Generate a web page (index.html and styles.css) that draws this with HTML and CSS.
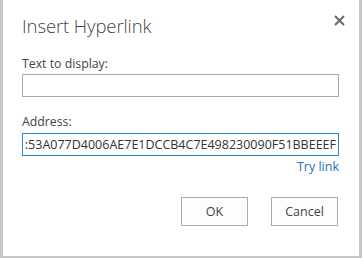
FILE: index.html
```html
<!DOCTYPE html>
<html>
<head>
<meta charset="utf-8">
<link rel="stylesheet" href="styles.css">
</head>
<body>
<div class="dialog">
  <div class="header">
    <h1 class="title">Insert Hyperlink</h1>
    <button class="close" aria-label="Close">
      <svg width="11" height="11" viewBox="0 0 11 11"><path d="M1 1L10 10M10 1L1 10" stroke="#6a6a6a" stroke-width="2" fill="none"/></svg>
    </button>
  </div>
  <label class="label first">Text to display:</label>
  <div class="field"></div>
  <label class="label second">Address:</label>
  <div class="field active"><span class="value">:53A077D4006AE7E1DCCB4C7E498230090F51BBEEEF</span></div>
  <div class="trow"><a class="try">Try link</a></div>
  <div class="buttons">
    <button class="btn">OK</button>
    <button class="btn">Cancel</button>
  </div>
</div>
</body>
</html>
```
FILE: styles.css
```css
html, body {
  margin: 0;
  padding: 0;
  background: #c6c6c6;
  width: 362px;
  height: 258px;
  overflow: hidden;
}
body {
  font-family: "Open Sans", "Noto Sans", sans-serif;
  color: #444;
}
.dialog {
  background: #fff;
  margin: 0 3px 0 3px;
  height: 256px;
  box-sizing: border-box;
  padding: 14px 20px 0 19px;
  display: flex;
  flex-direction: column;
}
.header {
  position: relative;
  display: flex;
  align-items: center;
}
.title {
  margin: 0;
  font-size: 18.5px;
  font-weight: 300;
  line-height: 24px;
  color: #444;
  letter-spacing: -0.1px;
}
.close {
  position: absolute;
  right: -6px;
  top: 1px;
  width: 11px;
  height: 11px;
  padding: 0;
  border: 0;
  background: none;
  display: block;
}
.close svg { display: block; }
.label {
  display: block;
  font-size: 12.3px;
  line-height: 16px;
  color: #444;
}
.label.first { margin-top: 18px; margin-bottom: 2px; }
.label.second { margin-top: 17px; margin-bottom: 3px; }
.field {
  height: 23px;
  box-sizing: border-box;
  border: 1px solid #ababab;
  background: #fff;
}
.field.active {
  border-color: #2a8ad4;
  display: flex;
  align-items: center;
  justify-content: flex-end;
  overflow: hidden;
  padding: 0 2px 0 2px;
}
.value {
  white-space: nowrap;
  font-size: 12.5px;
  color: #333;
  line-height: 16px;
}
.trow {
  display: flex;
  justify-content: flex-end;
  margin-top: 3px;
}
.try {
  font-size: 12.5px;
  line-height: 16px;
  color: #2a6fb8;
}
.buttons {
  display: flex;
  justify-content: flex-end;
  gap: 23px;
  margin-top: 22px;
  padding-right: 1px;
}
.btn {
  width: 67px;
  height: 29px;
  border: 1px solid #ababab;
  background: #fdfdfd;
  font-family: "Open Sans", "Noto Sans", sans-serif;
  font-size: 12.5px;
  color: #444;
  padding: 0;
}
```
